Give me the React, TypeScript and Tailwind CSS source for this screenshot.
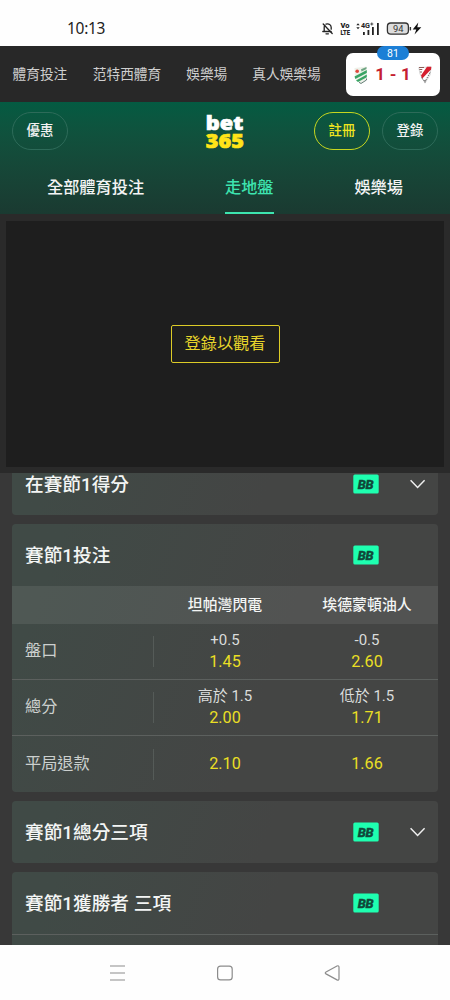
import React from 'react';
import { clsx } from 'clsx';

const topLinks = [
  { label: '體育投注', gap: 'ml-[12.500px]' },
  { label: '范特西體育', gap: 'ml-[25.500px]' },
  { label: '娛樂場', gap: 'ml-[25px]' },
  { label: '真人娛樂場', gap: 'ml-[25px]' },
];

const rows = [
  { label: '盤口', cells: [['+0.5', '1.45'], ['-0.5', '2.60']] },
  { label: '總分', cells: [['高於 1.5', '2.00'], ['低於 1.5', '1.71']] },
  { label: '平局退款', cells: [['', '2.10'], ['', '1.66']] },
];

function StatusIcons() {
  return (
    <svg className="w-[104px] h-[20px]" viewBox="320 18 104 20" fill="none" fontFamily="Roboto, sans-serif">
      {/* Muted bell */}
      <g stroke="#222" strokeWidth="1.3" strokeLinecap="round" strokeLinejoin="round">
        <path d="M322.800 31.500h8.300M324.200 31v-3.600a3.400 3.400 0 0 1 .5-1.900M326 24.200c2.800-1 5.200.8 5.200 3.400v1.600" />
        <path d="M323.200 24l9 9.500M326 33.800h2.400" />
      </g>
      <g fill="#222" fontWeight="900">
        <text x="340.5" y="28" fontSize="7.500" textLength="9" lengthAdjust="spacingAndGlyphs">Vo</text>
        <text x="340.5" y="35.200" fontSize="8" textLength="9.500" lengthAdjust="spacingAndGlyphs">LTE</text>
        <text x="361" y="28.200" fontSize="7.500" fontWeight="700" textLength="9" lengthAdjust="spacingAndGlyphs">4G</text>
        <path d="M371.800 22.500v3M370.300 24h3" stroke="#222" strokeWidth=".8" />
      </g>
      <g fill="#222">
        <path d="M356.3 25.3l1.7-2 1.7 2zM356.3 27.2l1.7 2 1.7-2z" />
        <path d="M363 32h1.8v3H363zM367.5 30h1.8v5h-1.8zM372 27h1.8v8H372zM377 23h1.8v12H377z" />
      </g>
      {/* Battery */}
      <rect x="387.4" y="23" width="21" height="11.2" rx="3.4" fill="#ddd" stroke="#333" strokeWidth="1.3" />
      <path d="M410.4 27v3.4" stroke="#333" strokeWidth="1.4" />
      <text x="393" y="32" fontSize="9.5" fill="#333" textLength="10.5" lengthAdjust="spacingAndGlyphs">94</text>
      <path d="M418.3 22.5l-5.6 6.9h3.6l-1.8 5.1 6.8-7.3h-4z" fill="#111" />
    </svg>
  );
}

function HomeCrest() {
  return (
    <svg className="w-[14px] h-[18px]" viewBox="0 0 14 18">
      <path d="M.5 2L12.500.5v12q-1 3-5.500 5Q2.500 15.500 1 12z" fill="#eef2ea" />
      <path d="M.5 10.500L12.800 4v3L1.300 13z" fill="#3aa465" />
      <path d="M2 14.500L12.800 8.500v2.700L4 16z" fill="#3aa465" />
      <path d="M7 3.200L12.500 1v2L7.500 5.500z" fill="#6fa583" />
      <circle cx="3.200" cy="5.300" r="1.800" fill="#e0493f" />
      <path d="M5 16.300l2 1.200 5.500-3.500v-1.500" fill="none" stroke="#55706a" strokeWidth=".9" />
    </svg>
  );
}

function AwayCrest() {
  return (
    <svg className="w-[14px] h-[18px]" viewBox="0 0 14 18">
      <path d="M.8 1.500L13.200 1 12 9 7 17 2 8z" fill="#fff" stroke="#aaa" strokeWidth=".5" />
      <path d="M9 .8h4.300l-.3 2.700L4.300 12.500 3 9.500z" fill="#d5202f" />
      <path d="M1 1.500h5M1.300 3.500h3M2 6h2" stroke="#8c5d58" strokeWidth="1" />
      <path d="M12 6.500l-4.600 8.500M3.500 11.500l2 3" fill="none" stroke="#444" strokeWidth=".8" strokeDasharray="1.500 1" />
      <path d="M5.800 14h2.400L7 17.500z" fill="#888" />
    </svg>
  );
}

function Logo() {
  return (
    <svg className="w-[40px] h-[38px] overflow-visible" viewBox="0 0 40 38" fontFamily="Open Sans, sans-serif" fontWeight="800" fontSize="20">
      <text x=".8" y="18" fill="#fff" stroke="#fff" strokeWidth=".7" textLength="37.500" lengthAdjust="spacingAndGlyphs">bet</text>
      <text x=".8" y="35.500" fill="#ffe418" stroke="#ffe418" strokeWidth=".7" textLength="38" lengthAdjust="spacingAndGlyphs">365</text>
    </svg>
  );
}

function BetBuilderBadge() {
  return (
    <svg className="w-[26px] h-[20px] shrink-0" viewBox="0 0 26 20">
      <rect x=".3" y=".5" width="25.400" height="19" rx="1.500" fill="#1effb0" />
      <text x="4.800" y="14.500" fontFamily="Roboto, sans-serif" fontWeight="900" fontStyle="italic" fontSize="13" fill="#10493a" stroke="#10493a" strokeWidth=".3" textLength="15.800">
        BB
      </text>
    </svg>
  );
}

function MarketHeader({ title, collapsed = false }: { title: string; collapsed?: boolean }) {
  return (
    <div className="flex h-[62px] items-center pl-[13px] pr-[12px]">
      <h2 className="flex-1 pt-[2px] text-[18.700px] leading-6 font-medium text-[#f3f5f4]">{title}</h2>
      <BetBuilderBadge />
      <div className="ml-[30px] w-[17px]">
        {collapsed && (
          <svg className="w-[17px] h-[10px]" viewBox="0 0 17 10" fill="none" stroke="#eee" strokeWidth="1.500">
            <path d="M1.600 1.300l7 7.200 7-7.200" />
          </svg>
        )}
      </div>
    </div>
  );
}

function Card({ className, children }: { className?: string; children: React.ReactNode }) {
  return (
    <section className={clsx('shrink-0 overflow-hidden rounded-[4px] bg-linear-110 from-[#404a46] from-10% to-[#444544] to-60%', className)}>
      {children}
    </section>
  );
}

export default function App() {
  return (
    <div className="flex h-[1000px] w-[450px] flex-col overflow-hidden bg-[#383838] font-['Roboto','Noto_Sans_CJK_TC',sans-serif]">
      {/* Status bar */}
      <div className="flex h-[46px] shrink-0 items-start justify-between bg-[#fefefe] pl-[67px] pr-[26px] pt-[18px]">
        <span className="font-['Noto_Sans',sans-serif] text-[15.500px] leading-[21px] tracking-[-0.300px] text-[#222]">10:13</span>
        <StatusIcons />
      </div>

      {/* Site links */}
      <div className="relative flex h-[56px] shrink-0 items-center bg-[#282828] text-[13.700px] text-[#cfcfcf]">
        {topLinks.map((link) => (
          <span key={link.label} className={clsx('whitespace-nowrap', link.gap)}>
            {link.label}
          </span>
        ))}
        <div className="absolute left-[346px] top-[7px] flex h-[43px] w-[94px] items-center justify-between rounded-[7px] bg-white px-[8px]">
          <HomeCrest />
          <span className="text-[17px] font-bold text-[#c51f32] [word-spacing:0.500px]">1 - 1</span>
          <AwayCrest />
          <span className="absolute -top-[7px] left-[31px] h-[14px] w-[32px] rounded-full bg-[#1c7fd6] text-center text-[10.500px] leading-[15px] text-white">
            81
          </span>
        </div>
      </div>

      {/* Header */}
      <header className="h-[112px] shrink-0 bg-linear-to-b from-[#045b42] to-[#1a3a31]">
        <div className="grid h-[57px] grid-cols-[1fr_auto_1fr] items-center px-[12px] text-[13.400px] font-medium">
          <button className="h-[38px] w-[56px] rounded-full border border-[#2d6b59] pt-[2px] text-[#f2f2f2]">優惠</button>
          <Logo />
          <div className="flex justify-end gap-[12px]">
            <button className="h-[38px] w-[56px] rounded-full border border-[#c6d61f] pt-[2px] text-[#f0e51e]">註冊</button>
            <button className="h-[38px] w-[56px] rounded-full border border-[#2d6b59] pt-[2px] text-[#f2f2f2]">登錄</button>
          </div>
        </div>
        <nav className="flex h-[55px] justify-between px-[47px] text-[16.200px] font-medium leading-[57px] text-[#f4f4f4]">
          <span>全部體育投注</span>
          <span className="border-b-2 border-[#3de4af] text-[#3de4af]">走地盤</span>
          <span>娛樂場</span>
        </nav>
      </header>

      {/* Stream */}
      <div className="h-[259px] shrink-0 bg-[#2a2a2a] px-[6px] pt-[7px] pb-[6px]">
        <div className="flex h-full items-center justify-center bg-[#1e1e1e]">
          <button className="h-[38px] w-[109px] rounded-[2px] border border-[#dccb27] text-[16.200px] text-[#e6d42b]">登錄以觀看</button>
        </div>
      </div>

      {/* Markets */}
      <main className="flex min-h-0 flex-1 flex-col gap-[9px] overflow-hidden px-[12px]">
        <Card className="-mt-[20px]">
          <MarketHeader title="在賽節1得分" collapsed />
        </Card>

        <Card>
          <MarketHeader title="賽節1投注" />
          <div className="grid h-[38px] grid-cols-3 items-center bg-white/8 text-center text-[14.900px] font-medium text-[#f3f5f4]">
            <span />
            <span>坦帕灣閃電</span>
            <span>埃德蒙頓油人</span>
          </div>
          {rows.map((row, i) => (
            <div key={row.label} className={clsx('grid h-[56px] grid-cols-3 items-center', i < 2 ? 'border-b border-[#5c605e] pb-px' : 'pb-0')}>
              <div className="flex h-[31px] items-center border-r border-[#555b58] pl-[13px] text-[16.200px] text-[#ccd0ce]">{row.label}</div>
              {row.cells.map(([line, odds]) => (
                <div key={odds} className="flex flex-col items-center">
                  {line && <span className="h-[21px] whitespace-nowrap text-[15px] leading-[21px] text-[#dadcdb]">{line}</span>}
                  <span className="text-[16.200px] leading-[22px] text-[#eadf24]">{odds}</span>
                </div>
              ))}
            </div>
          ))}
        </Card>

        <Card>
          <MarketHeader title="賽節1總分三項" collapsed />
        </Card>

        <Card className="h-[80px]">
          <MarketHeader title="賽節1獲勝者 三項" />
          <div className="border-t border-[#5c605e]" />
        </Card>
      </main>

      {/* System navigation */}
      <div className="flex h-[55px] shrink-0 items-center justify-center bg-[#fefefe]">
        <svg className="w-[240px] h-[20px]" viewBox="105 962.500 240 20" fill="none" stroke="#8c8c8c" strokeWidth="1.200">
          <path d="M110 965.500h15M110 972.500h15M110 979.500h15" />
          <rect x="217.600" y="965.600" width="14.600" height="13.800" rx="3" />
          <path d="M326 971.500l11-6q2-.8 2 1.200v11.500q0 2-2 1.200l-11-6q-1.500-1 0-1.900z" />
        </svg>
      </div>
    </div>
  );
}
